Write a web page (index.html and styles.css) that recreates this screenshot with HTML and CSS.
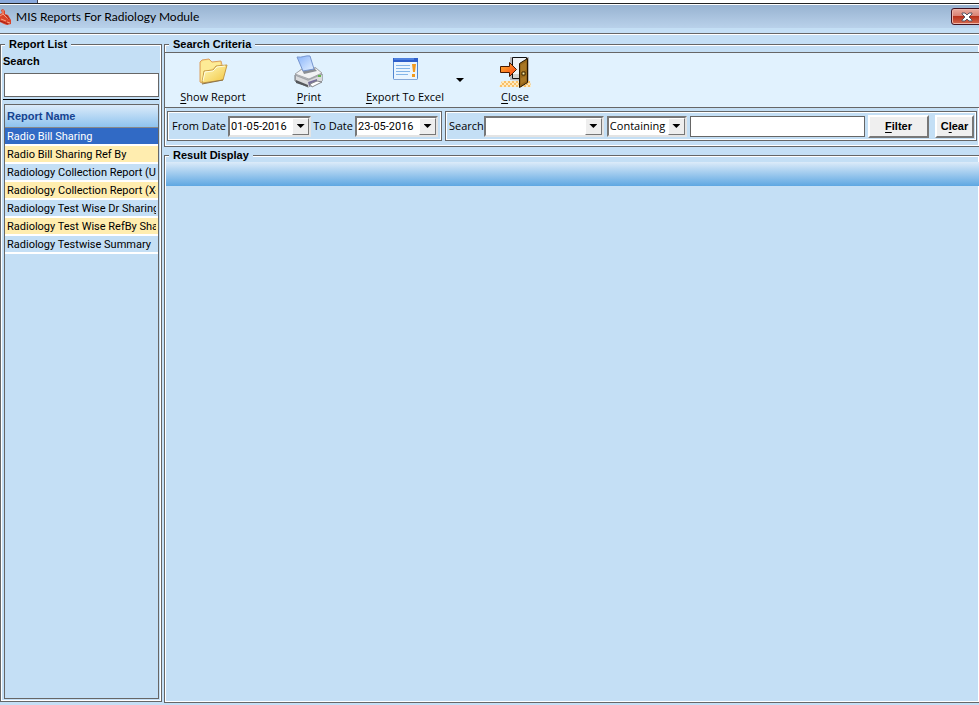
FILE: index.html
```html
<!DOCTYPE html>
<html lang="en">
<head>
<meta charset="utf-8">
<title>MIS Reports For Radiology Module</title>
<link rel="stylesheet" href="styles.css">
</head>
<body>
<div class="backdrop"><div class="backdrop-tab"></div></div>
<header class="titlebar">
  <svg class="app-icon" width="12" height="16" viewBox="0 0 12 16" aria-hidden="true">
    <path d="M1 1l2-1 2 2v3l3 1 3 5v4l-4 1-3-1-4-2V5l2-1z" fill="#d8432a"/>
    <path d="M0 7l3-2 3 3 3 2M3 1v4M1 10l5 2M7 13l3 1" stroke="#f7a184" fill="none"/>
    <path d="M6 6l3 4M0 12l3 1 5 2" stroke="#a81f14" fill="none"/>
  </svg>
  <h1 class="title">MIS Reports For Radiology Module</h1>
  <button class="window-close" type="button" aria-label="Close window">
    <svg width="12" height="10" viewBox="0 0 12 10" aria-hidden="true">
      <path d="M1 1h3l2 2 2-2h3v1L8 5l3 3v1H8L6 7 4 9H1V8l3-3-3-3z" fill="#fff" stroke="#5a5563"/>
    </svg>
  </button>
</header>
<main class="workspace">
  <fieldset class="group report-list">
    <legend>Report List</legend>
    <label class="search-label" for="report-search">Search</label>
    <input class="search-box" id="report-search" type="text">
    <hr class="divider">
    <div class="list-frame">
      <table class="reports">
        <thead><tr><th scope="col">Report Name</th></tr></thead>
        <tbody>
          <tr class="selected"><td><span>Radio Bill Sharing</span></td></tr>
          <tr><td><span>Radio Bill Sharing Ref By</span></td></tr>
          <tr><td><span>Radiology Collection Report (US</span></td></tr>
          <tr><td><span>Radiology Collection Report (X-</span></td></tr>
          <tr><td><span>Radiology Test Wise Dr Sharing</span></td></tr>
          <tr><td><span>Radiology Test Wise RefBy Sha</span></td></tr>
          <tr><td><span>Radiology Testwise Summary</span></td></tr>
        </tbody>
      </table>
    </div>
  </fieldset>
  <div class="content">
    <fieldset class="group criteria">
      <legend>Search Criteria</legend>
      <div class="toolbar">
        <button class="tool" type="button">
          <svg width="32" height="34" viewBox="0 0 32 34" aria-hidden="true">
            <defs><linearGradient id="fold" x1="0" y1="0" x2="1" y2="1"><stop offset="0" stop-color="#fffbc0"/><stop offset="1" stop-color="#f2c53d"/></linearGradient></defs>
            <path d="M3 27V7l2-2 7-1 3 3 9-1 1 4v14L5 28z" fill="#f9dc80" stroke="#dba060"/>
            <path d="M4 26V8l2-2 6-1 3 3 8-1v3L9 16z" fill="#fdeb96"/>
            <path d="M5 28l2-12 9-1 3-4 11-1-4 15z" fill="url(#fold)" stroke="#c59a45"/>
            <path d="M6 26l2-9 8-1 4-4 8-1" stroke="#fffde0" fill="none"/>
            <path d="M5 29l21-4" stroke="#8d7348" fill="none"/>
          </svg>
          <span><u>S</u>how Report</span>
        </button>
        <button class="tool" type="button">
          <svg width="32" height="34" viewBox="0 0 32 34" aria-hidden="true">
            <defs><linearGradient id="sheet" x1="0" y1="0" x2="1" y2="1"><stop offset="0" stop-color="#86b2fa"/><stop offset="1" stop-color="#e6f2ff"/></linearGradient></defs>
            <path d="M2 20l7-6 14-1 6 6v7l-14 6-13-6z" fill="#bfc1c4" stroke="#6f7378"/>
            <path d="M2 19l7-5 14-1 6 5-13 6z" fill="#f1f2f3" stroke="#a6a9ad"/>
            <path d="M9 15l12-2 3 3-13 3z" fill="#8a8e93"/>
            <path d="M4 2c5 1 9-2 13-1l4 13-11 2z" fill="url(#sheet)" stroke="#7695cf"/>
            <path d="M3 21l12 5 14-6v6l-14 6-12-6z" fill="#d9dadc"/>
            <path d="M2 20l13 5 14-6" stroke="#a0a3a8" fill="none"/>
            <path d="M3 25l12 5v2L3 28z" fill="#55585c"/>
            <path d="M15 27l9-3v4l-8 3z" fill="#77709a"/>
            <path d="M17 29l7-3 5 1-10 5z" fill="#fff" stroke="#85888c"/>
            <path d="M25 20h3v2h-3z" fill="#62b74b"/>
          </svg>
          <span><u>P</u>rint</span>
        </button>
        <button class="tool" type="button">
          <svg width="32" height="34" viewBox="0 0 32 34" aria-hidden="true">
            <rect x="4.500" y="3.500" width="24" height="21" rx="1" fill="#e9f5ff" stroke="#4f85d0"/>
            <path d="M4 3h25v4H4z" fill="#2d5fcb"/>
            <path d="M5 4h20" stroke="#6da0f0"/>
            <path d="M7 10.500h14M7 13.500h14M7 16.500h14M7 19.500h12" stroke="#83b5e8"/>
            <path d="M23 9h4l-1 8h-2zM23 19h3v3h-3z" fill="#f39a1d"/>
            <path d="M5 24.500h23" stroke="#86a9d8"/>
          </svg>
          <span><u>E</u>xport To Excel</span>
        </button>
        <button class="tool-menu" type="button" aria-label="Export options"><i class="caret"></i></button>
        <button class="tool" type="button">
          <svg width="34" height="34" viewBox="0 0 34 34" aria-hidden="true">
            <defs>
              <pattern id="floor" width="4" height="4" patternUnits="userSpaceOnUse"><path d="M0 0h4v4H0z" fill="#ffebc0"/><path d="M0 0h2v2H0zM2 2h2v2H2z" fill="#f8c069"/></pattern>
              <linearGradient id="arrow" x1="0" y1="0" x2="1" y2="1"><stop offset="0" stop-color="#ffb733"/><stop offset="1" stop-color="#f83c10"/></linearGradient>
            </defs>
            <path d="M4 26h28l1 6H1z" fill="url(#floor)"/>
            <path d="M12 25V2h19v24h-2" fill="#b8b8bc"/>
            <path d="M14.500 23.500V2.500h14v21z" fill="#eef2f5" stroke="#111"/>
            <path d="M15 19h8v4h-8z" fill="#d3d3cf"/>
            <path d="M21.500 8.500l8-5v24l-8 5z" fill="#96661a" stroke="#241500"/>
            <path d="M23 10l5-3v8l-5 3zM23 23l5-2v5l-5 3z" fill="#a97725"/>
            <path d="M24 17h3v3h-3z" fill="#fff1a8" stroke="#3a2500"/>
            <path d="M2.500 11.500h9v-4l7 7-7 7v-4h-9z" fill="url(#arrow)" stroke="#4b1a00"/>
          </svg>
          <span><u>C</u>lose</span>
        </button>
      </div>
      <div class="filters">
        <div class="panel dates">
          <label for="from-date">From Date</label>
          <div class="combo date"><input id="from-date" type="text" value="01-05-2016"><span class="drop"><i class="caret"></i></span></div>
          <label for="to-date">To Date</label>
          <div class="combo date"><input id="to-date" type="text" value="23-05-2016"><span class="drop"><i class="caret"></i></span></div>
        </div>
        <div class="panel query">
          <label for="field">Search</label>
          <div class="combo field"><select id="field"><option></option></select><span class="drop"><i class="caret"></i></span></div>
          <div class="combo match"><select aria-label="Match type"><option>Containing</option></select><span class="drop"><i class="caret"></i></span></div>
          <input class="query-text" type="text" aria-label="Search text">
          <button class="push filter" type="button"><u>F</u>ilter</button>
          <button class="push" type="button">C<u>l</u>ear</button>
        </div>
      </div>
    </fieldset>
    <fieldset class="group results">
      <legend>Result Display</legend>
      <div class="result-header"></div>
    </fieldset>
  </div>
</main>
</body>
</html>
```
FILE: styles.css
```css
:root {
  --sky: #c4dff5;
  --line: #666;
  --ui: "Open Sans", "Noto Sans", sans-serif;
  --plain: "Liberation Sans", Arial, sans-serif;
  --data: Roboto, "Liberation Sans", sans-serif;
}

* { box-sizing: border-box; }

body {
  margin: 0;
  min-height: 100vh;
  display: flex;
  flex-direction: column;
  background: var(--sky);
  color: #000;
  font: 11px/14px var(--plain);
  overflow-x: hidden;
}

button, input, select {
  font: inherit;
  color: inherit;
  margin: 0;
  border-radius: 0;
}

u { text-underline-offset: 2px; }

.backdrop {
  height: 4px;
  background: #fff;
  border-bottom: 1px solid #222;
}

.backdrop-tab {
  width: 38px;
  height: 3px;
  background: #8aa9dc;
  border-right: 1px solid #445;
}

.titlebar {
  display: flex;
  align-items: center;
  height: 24px;
  border-top: 1px solid #fff;
  background: linear-gradient(#98b3d1, #b9d1ea);
}

.app-icon { margin-right: 4px; }

.title {
  flex: 1;
  margin: 0;
  font: 12px/16px Lato, var(--ui);
}

.window-close {
  width: 32px;
  height: 17px;
  margin-right: -4px;
  padding: 0;
  display: grid;
  place-items: center;
  border: 1px solid #431422;
  border-radius: 3px;
  background: linear-gradient(#e9a99d, #d98072 48%, #b8321c 50%, #d4684f);
  box-shadow: inset 0 0 0 1px #eeb5aa;
}

.workspace {
  flex: 1;
  display: flex;
  gap: 2px;
  margin-top: 5px;
  padding: 3px 0;
  border-top: 1px solid var(--line);
  box-shadow: inset 0 1px #fff;
}

.group {
  margin: 0;
  padding: 0;
  min-width: 0;
  border: 1px solid var(--line);
  box-shadow: inset 0 0 0 1px #fff;
}

.group legend {
  margin-left: 4px;
  padding: 0 4px;
  background: var(--sky);
  font: bold 11px/14px var(--plain);
}

.report-list {
  flex: 0 0 162px;
  display: flex;
  flex-direction: column;
  padding: 0 2px 2px;
  margin-bottom: 1px;
}

.report-list legend { margin-left: 2px; }

.search-label {
  display: block;
  margin-top: 3px;
  font-weight: bold;
}

.search-box {
  display: block;
  width: calc(100% - 1px);
  height: 24px;
  margin: 5px 0 2px 1px;
  border: 1px solid var(--line);
  background: #fff;
}

.divider {
  width: 100%;
  height: 1px;
  margin: 0;
  border: 0;
  background: #000;
}

.list-frame {
  height: calc(100vh - 110px);
  margin: 4px 0 0 1px;
  border: 1px solid var(--line);
}

.reports {
  width: 100%;
  table-layout: fixed;
  border-spacing: 0;
}

.reports th {
  height: 23px;
  padding: 0 2px;
  text-align: left;
  color: #154390;
  background: linear-gradient(#dcebf9, #8fc3ee);
  border-bottom: 1px solid #888;
}

.reports td {
  height: 18px;
  padding: 0 2px;
  border-bottom: 2px solid #fff;
  font-family: var(--data);
}

.reports td span {
  display: block;
  height: 16px;
  line-height: 18px;
  overflow: hidden;
  white-space: nowrap;
}

.reports tr:nth-child(even) td { background: #ffedaf; }

.reports .selected td {
  background: #316ac5;
  color: #fff;
}

.content {
  flex: 1;
  min-width: 0;
  display: flex;
  flex-direction: column;
  gap: 1px;
}

.content .group { border-right: 0; }

.content .criteria { padding-top: 1px; }

.toolbar {
  display: flex;
  height: 56px;
  border-top: 1px solid var(--line);
  border-bottom: 1px solid var(--line);
  background: #e1f2fe;
}

.tool {
  width: 96px;
  padding: 2px 0 0;
  display: flex;
  flex-direction: column;
  align-items: center;
  border: 0;
  background: none;
  font: 11px/15px var(--ui);
}

.tool svg { flex: none; }

.tool-menu {
  width: 14px;
  padding: 0;
  display: grid;
  place-items: center;
  border: 0;
  background: none;
}

.caret {
  display: block;
  width: 8px;
  height: 4px;
  background: #000;
  clip-path: polygon(0 0, 100% 0, 50% 100%);
}

.filters {
  display: flex;
  gap: 3px;
  padding: 3px 2px 5px;
}

.panel {
  height: 30px;
  display: flex;
  align-items: center;
  border: 1px solid var(--line);
  box-shadow: inset 0 0 0 1px #fff;
  font: 11px/14px var(--ui);
}

.dates {
  flex: 0 0 275px;
  justify-content: space-between;
  padding: 0 3px 0 4px;
}

.query {
  flex: 1;
  min-width: 0;
  gap: 3px;
  padding: 0 2px 0 3px;
}

.combo {
  flex: none;
  display: grid;
  grid-template-columns: 1fr 17px;
  height: 21px;
  border: 2px solid;
  border-color: #777 #e4e4e4 #e4e4e4 #777;
  background: #fff;
}

.combo input, .combo select {
  grid-area: 1 / 1 / 2 / 3;
  width: 100%;
  min-width: 0;
  height: 17px;
  padding: 0 18px 0 1px;
  border: 0;
  background: #fff;
  appearance: none;
}

.combo input { font-family: var(--data); }

.date { width: 83px; }
.field { width: 120px; margin-left: -3px; }
.match { width: 80px; }

.drop {
  grid-area: 1 / 2 / 2 / 3;
  display: grid;
  place-items: center;
  border: 1px solid;
  border-color: #fff #777 #777 #fff;
  background: #eee;
  pointer-events: none;
}

.query-text {
  flex: 1;
  min-width: 0;
  height: 21px;
  border: 1px solid var(--line);
  background: #fff;
}

.push {
  width: 39px;
  height: 23px;
  padding: 0;
  border: 2px solid;
  border-color: #fff #777 #777 #fff;
  background: #efefef;
  font: bold 11px/14px var(--plain);
}

.filter {
  width: 61px;
  margin-right: 3px;
}

.results { flex: 1; }

.result-header {
  height: 24px;
  margin-left: 1px;
  background: linear-gradient(#dcebf9, #5ea7e2);
}
```
